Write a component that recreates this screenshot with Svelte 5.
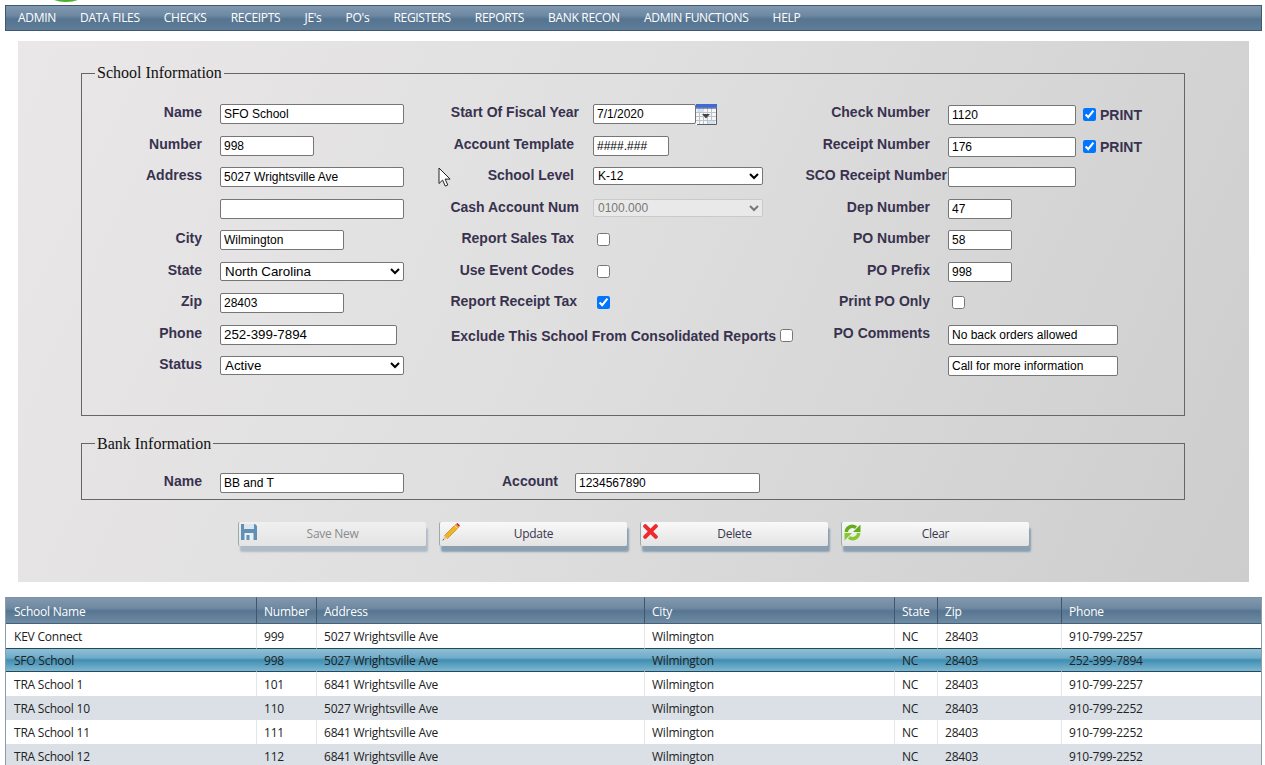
<script>
  const menu = ['ADMIN','DATA FILES','CHECKS','RECEIPTS',"JE's","PO's",'REGISTERS','REPORTS','BANK RECON','ADMIN FUNCTIONS','HELP'];
  const left = [
    {l:'Name',v:'SFO School',c:'w184'},
    {l:'Number',v:'998',c:'w94'},
    {l:'Address',v:'5027 Wrightsville Ave',c:'w184'},
    {l:'',v:'',c:'w184'},
    {l:'City',v:'Wilmington',c:'w124'},
    {l:'State',s:'North Carolina',c:'w184 big'},
    {l:'Zip',v:'28403',c:'w124'},
    {l:'Phone',v:'252-399-7894',c:'w177 big'},
    {l:'Status',s:'Active',c:'w184 big'}
  ];
  const right = [
    {l:'Check Number',v:'1120',c:'w128 down',p:true},
    {l:'Receipt Number',v:'176',c:'w128 down',p:true},
    {l:'SCO Receipt Number',v:'',c:'w128',lc:'wide'},
    {l:'Dep Number',v:'47',c:'w64'},
    {l:'PO Number',v:'58',c:'w64'},
    {l:'PO Prefix',v:'998',c:'w64'},
    {l:'Print PO Only',k:true},
    {l:'PO Comments',v:'No back orders allowed',c:'w170'},
    {l:'',v:'Call for more information',c:'w170'}
  ];
  const buttons = [
    {t:'Save New',i:'save',d:true},
    {t:'Update',i:'edit'},
    {t:'Delete',i:'del'},
    {t:'Clear',i:'clr'}
  ];
  const cols = ['School Name','Number','Address','City','State','Zip','Phone'];
  const rows = [
    ['KEV Connect','999','5027 Wrightsville Ave','Wilmington','NC','28403','910-799-2257'],
    ['SFO School','998','5027 Wrightsville Ave','Wilmington','NC','28403','252-399-7894'],
    ['TRA School 1','101','6841 Wrightsville Ave','Wilmington','NC','28403','910-799-2257'],
    ['TRA School 10','110','5027 Wrightsville Ave','Wilmington','NC','28403','910-799-2252'],
    ['TRA School 11','111','6841 Wrightsville Ave','Wilmington','NC','28403','910-799-2252'],
    ['TRA School 12','112','6841 Wrightsville Ave','Wilmington','NC','28403','910-799-2252']
  ];
  const rowClass = ['', 'sel', '', 'alt', '', 'alt'];
</script>

<div class="page">
  <div class="logo"></div>
  <nav class="menu">
    {#each menu as m}<span>{m}</span>{/each}
  </nav>

  <section class="panel">
    <fieldset>
      <legend>School Information</legend>
      <div class="cols">
        <div class="col c1">
          {#each left as r}
            <div class="row">
              <span class="lab">{r.l}</span>
              {#if r.s}
                <select class={r.c}><option>{r.s}</option></select>
              {:else}
                <input class={r.c} type="text" value={r.v} />
              {/if}
            </div>
          {/each}
        </div>

        <div class="col c2">
          <div class="row">
            <span class="lab p0">Start Of Fiscal Year</span>
            <div class="inl">
              <input class="w103" type="text" value="7/1/2020" />
              <svg class="cal" width="21" height="21" viewBox="0 0 21 21">
                <rect width="21" height="21" fill="#f4f6f8"/>
                <path d="M0 8.5h21M0 12.5h21M0 16.5h21M3.5 4v17M7.5 4v17M11.5 4v17M15.5 4v17" stroke="#bfc3c9" stroke-width="1"/>
                <rect x="1" y="5" width="7" height="3" fill="#cfe3f4"/>
                <rect x="12" y="17" width="7" height="3" fill="#cfe3f4"/>
                <rect width="21" height="3.5" fill="#3f68d8"/>
                <rect y="3.5" width="21" height="1" fill="#2b3f78"/>
                <path d="M20.5 4v16.5H1" fill="none" stroke="#5c6066" stroke-width="1"/>
                <path d="M6 10h8l-4 4.5z" fill="#3f4348"/>
              </svg>
            </div>
          </div>
          <div class="row"><span class="lab">Account Template</span><input class="w76" type="text" value="####.###" /></div>
          <div class="row"><span class="lab">School Level</span><select class="w170 short"><option>K-12</option></select></div>
          <div class="row"><span class="lab p0">Cash Account Num</span><select class="w170 short" disabled><option>0100.000</option></select></div>
          <div class="row"><span class="lab">Report Sales Tax</span><input class="chk" type="checkbox" /></div>
          <div class="row"><span class="lab">Use Event Codes</span><input class="chk" type="checkbox" /></div>
          <div class="row"><span class="lab p2">Report Receipt Tax</span><input class="chk" type="checkbox" checked /></div>
          <div class="row excl"><span class="exlab">Exclude This School From Consolidated Reports</span><input class="chk ex" type="checkbox" /></div>
        </div>

        <div class="col c3">
          {#each right as r}
            <div class="row">
              <span class="lab {r.lc ?? ''}">{r.l}</span>
              {#if r.k}
                <input class="chk" type="checkbox" />
              {:else}
                <div class="inl">
                  <input class={r.c} type="text" value={r.v} />
                  {#if r.p}
                    <input class="chk pchk" type="checkbox" checked />
                    <span class="print">PRINT</span>
                  {/if}
                </div>
              {/if}
            </div>
          {/each}
        </div>
      </div>
    </fieldset>

    <fieldset class="bank">
      <legend>Bank Information</legend>
      <div class="bankrow">
        <span class="lab">Name</span>
        <input class="w184 bn" type="text" value="BB and T" />
        <span class="lab">Account</span>
        <input class="w185 ba" type="text" value="1234567890" />
      </div>
    </fieldset>

    <div class="btns">
      {#each buttons as b}
        <button class:dis={b.d} type="button">
          {#if b.i === 'save'}
            <svg class="ic" width="16" height="16" viewBox="0 0 16 16">
              <path d="M0 0h14l2 2v14H0z" fill="#628fb4"/>
              <rect x="3" y="0" width="10" height="5" fill="#dce6ed"/>
              <rect x="3.5" y="9" width="9" height="7" fill="#e9eff3"/>
              <rect x="5.5" y="11" width="3" height="5" fill="#628fb4"/>
            </svg>
          {:else if b.i === 'edit'}
            <svg class="ic" width="18" height="18" viewBox="0 0 18 18">
              <path d="M13.5 1.5l3 3L5.5 15.5l-3-3z" fill="#f0b429" stroke="#c47f12" stroke-width=".7"/>
              <path d="M12.5 2.5l3 3" stroke="#fbe08a" stroke-width="1"/>
              <path d="M2.5 12.5l3 3L0.5 17.5z" fill="#e8c9a0"/>
              <path d="M0.5 17.5l1.6-.7-.9-.9z" fill="#333"/>
              <path d="M14 1l1.5-1 2.5 2.5-1 1.5z" fill="#d8232a"/>
            </svg>
          {:else if b.i === 'del'}
            <svg class="ic" width="15" height="15" viewBox="0 0 15 15">
              <path d="M2.2 2.2l10.6 10.6M12.8 2.2L2.2 12.8" stroke="#ee2a2f" stroke-width="4" stroke-linecap="round"/>
            </svg>
          {:else}
            <svg class="ic" width="17" height="17" viewBox="0 0 17 17">
              <path d="M2.3 8A6 6 0 0 1 12 3.6" fill="none" stroke="#63ad1c" stroke-width="3.4"/>
              <path d="M16.5 0.5V8H9z" fill="#63ad1c"/>
              <path d="M14.7 9A6 6 0 0 1 5 13.4" fill="none" stroke="#86c92f" stroke-width="3.4"/>
              <path d="M0.5 16.5V9H8z" fill="#86c92f"/>
            </svg>
          {/if}
          {b.t}
        </button>
      {/each}
    </div>
  </section>

  <table class="grid">
    <colgroup>
      <col class="k1" /><col class="k2" /><col class="k3" /><col class="k4" /><col class="k5" /><col class="k6" /><col class="k7" />
    </colgroup>
    <thead>
      <tr>{#each cols as c}<th>{c}</th>{/each}</tr>
    </thead>
    <tbody>
      {#each rows as r, i}
        <tr class={rowClass[i]}>{#each r as c}<td>{c}</td>{/each}</tr>
      {/each}
    </tbody>
  </table>

  <svg class="cursor" width="14" height="20" viewBox="0 0 14 20">
    <path d="M1 1v15.5l3.6-3.4 2.7 6 2.5-1.1-2.7-5.9h5z" fill="#fff" stroke="#222" stroke-width="1"/>
  </svg>
</div>

<style>
  :global(body) { margin: 0; background: #fff; overflow: hidden; }
  .page {
    position: relative;
    height: 765px;
    overflow: hidden;
    padding: 5px 3px 0 5px;
    box-sizing: border-box;
    font-family: "Liberation Sans", Arial, sans-serif;
  }
  .logo {
    position: absolute;
    left: 48px; top: -14px;
    width: 36px; height: 16px;
    border-radius: 50%;
    background: #4caf2a;
  }
  .menu {
    height: 26px;
    box-sizing: border-box;
    display: flex;
    gap: 24.1px;
    align-items: center;
    padding: 0 0 2px 12px;
    border: 1px solid #3f5870;
    background: linear-gradient(#8199b0 0%, #6d88a2 40%, #557490 55%, #5f7d98 100%);
    color: #fff;
    font-family: "Open Sans", sans-serif;
    font-size: 12px;
    letter-spacing: -0.3px;
  }
  .panel {
    margin: 10px 0 0 13px;
    width: 1231px;
    height: 541px;
    box-sizing: border-box;
    padding: 23px 64px 0 63px;
    background: linear-gradient(115deg, #e9e7e8 0%, #e0dfdf 45%, #cdcdcd 100%);
  }
  fieldset {
    margin: 0;
    padding: 0;
    min-width: 0;
    border: 1px solid #666;
    box-sizing: border-box;
  }
  legend {
    margin-left: 13px;
    padding: 0 2px;
    font: 16px/18px "Liberation Serif", "Times New Roman", serif;
    color: #111;
  }
  .cols {
    display: grid;
    grid-template-columns: 356px 362px 1fr;
    padding: 22px 0 27px;
  }
  .row {
    height: 31.5px;
    display: grid;
    align-items: start;
    justify-content: start;
  }
  .c1 .row { grid-template-columns: 120px auto; column-gap: 18px; }
  .c2 .row { grid-template-columns: 141px auto; column-gap: 14px; }
  .c3 .row { grid-template-columns: 130px auto; column-gap: 18px; }
  .lab {
    display: block;
    text-align: right;
    font-size: 14px;
    font-weight: 700;
    line-height: 17px;
    color: #38324f;
    white-space: nowrap;
  }
  .c2 .lab { padding-right: 5px; }
  .c2 .lab.p0 { padding-right: 0; }
  .c2 .lab.p2 { padding-right: 2px; }
  .lab.wide { margin-right: -17px; }
  input[type="text"], select {
    box-sizing: border-box;
    height: 20px;
    margin: 0;
    padding: 1px 3px;
    border: 1px solid #767676;
    border-radius: 2px;
    background: #fff;
    color: #000;
    font: 12px "Liberation Sans", Arial, sans-serif;
  }
  select { height: 19px; padding: 0; }
  select.short { height: 18px; }
  select:disabled { background: #ebebeb; color: #6d6d6d; border-color: #c8c8c8; opacity: 0.9; }
  .big { font-size: 13.33px !important; }
  .w64 { width: 64px; }
  .w76 { width: 76px; }
  .w94 { width: 94px; }
  .w103 { width: 103px; }
  .w124 { width: 124px; }
  .w128 { width: 128px; }
  .w170 { width: 170px; }
  .w177 { width: 177px; }
  .w184 { width: 184px; }
  .w185 { width: 185px; }
  .down { margin-top: 1px !important; }
  .inl { display: flex; align-items: flex-start; }
  .cal { display: block; flex: none; }
  .chk { width: 13px; height: 13px; margin: 3px 0 0 4px; }
  .c3 .pchk { margin: 4px 0 0 7px; }
  .print {
    margin: 3px 0 0 4px;
    font-size: 14px;
    font-weight: 700;
    line-height: 17px;
    color: #38324f;
  }
  .c2 .row.excl {
    display: flex;
    padding: 3px 0 0 13px;
    column-gap: 0;
  }
  .exlab {
    font-size: 14px;
    font-weight: 700;
    line-height: 17px;
    color: #38324f;
    white-space: nowrap;
  }
  .ex { margin: 1px 0 0 4px; }
  .bank { margin-top: 19px; height: 65px; }
  .bankrow {
    display: grid;
    grid-template-columns: 120px 202px 154px 202px;
    align-items: start;
    padding-top: 20px;
  }
  .bankrow input.bn { margin-left: 18px; }
  .bankrow input.ba { margin-left: 17px; }
  .btns {
    display: flex;
    gap: 13px;
    margin: 22px 0 0 157px;
  }
  button {
    position: relative;
    width: 188px;
    height: 24px;
    padding: 0;
    border: 0;
    border-left: 1px solid #9aa;
    border-radius: 2px;
    background: linear-gradient(#f9f9f9, #e3e3e3);
    box-shadow: 2px 6px 2px 0 #8a9fb0;
    color: #3a3650;
    font: 12px "Open Sans", sans-serif;
    letter-spacing: -0.3px;
  }
  button.dis {
    color: #8b8b8b;
    background: linear-gradient(#f0f0f0, #e4e4e4);
    box-shadow: 2px 6px 2px 0 #aebac5;
  }
  .ic { position: absolute; left: 2px; top: 2px; }
  .btns button:nth-child(2) .ic { top: 1px; }
  .grid {
    display: block;
    margin-top: 15px;
    border-left: 1px solid #8c9cac;
    border-right: 1px solid #8c9cac;
    border-spacing: 0;
    table-layout: fixed;
    width: 1257px;
    box-sizing: border-box;
    font-family: "Open Sans", sans-serif;
    font-size: 12px;
    letter-spacing: -0.22px;
  }
  .k1 { width: 250px; }
  .k2 { width: 60px; }
  .k3 { width: 328px; }
  .k4 { width: 250px; }
  .k5 { width: 43px; }
  .k6 { width: 124px; }
  .k7 { width: 200px; }
  th, td {
    box-sizing: border-box;
    padding: 0 0 0 7px;
    text-align: left;
    font-weight: 400;
    border-left: 1px solid #e2e7ec;
    white-space: nowrap;
  }
  th:first-child, td:first-child { padding-left: 8px; border-left: 0; }
  th {
    height: 27px;
    padding-top: 1px;
    color: #fff;
    border-left-color: #3f566d;
    border-top: 1px solid #7d92a6;
    border-bottom: 1px solid #46607a;
    background: linear-gradient(#8298ae 0%, #6f89a2 40%, #567590 52%, #6f8ba4 100%);
  }
  td { height: 24px; color: #222; background: #fff; }
  .alt td { background: #dae0e6; border-left-color: #dae0e6; }
  .sel td {
    border-left-color: transparent;
    border-top: 1px solid #24495e;
    border-bottom: 1px solid #24495e;
    background: linear-gradient(#8fbfd6 0%, #6fabc8 40%, #3f8eb3 50%, #7fb7d0 100%);
  }
  .cursor { position: absolute; left: 438px; top: 167px; }
</style>
